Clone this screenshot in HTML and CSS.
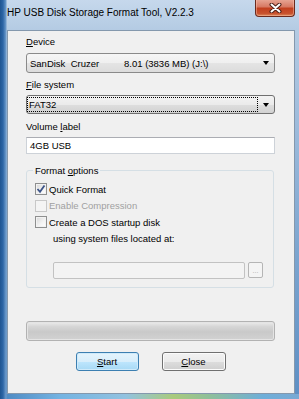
FILE: index.html
```html
<!DOCTYPE html>
<html>
<head>
  <title>HP USB Disk Storage Format Tool</title>
  <meta name="viewport" content="width=device-width, initial-scale=1.0">
  <link rel="stylesheet" href="styles.css">
</head>
<body>
  <div class="window">
    <div class="titlebar">
      <span class="title">HP USB Disk Storage Format Tool, V2.2.3</span>
      <span class="close-btn">
        <svg width="13" height="10" viewBox="0 0 13 10">
          <path d="M2.5 1.5 L10.5 8.5 M10.5 1.5 L2.5 8.5" stroke="#4a1d15" stroke-width="4" stroke-linecap="round"/>
          <path d="M2.5 1.5 L10.5 8.5 M10.5 1.5 L2.5 8.5" stroke="#ffffff" stroke-width="2" stroke-linecap="round"/>
        </svg>
      </span>
    </div>

    <div class="client">
      <div class="field-label"><u>D</u>evice</div>
      <div class="combo">
        <span class="combo-text">
          <span class="dev-name">SanDisk&nbsp; Cruzer</span>
          <span>8.01 (3836 MB) (J:\)</span>
        </span>
        <span class="arrow"></span>
      </div>

      <div class="field-label label-fs"><u>F</u>ile system</div>
      <div class="combo combo-fs">
        <span class="focus-rect">FAT32</span>
        <span class="arrow"></span>
      </div>

      <div class="field-label label-vol">Volume <u>l</u>abel</div>
      <div class="textbox">4GB USB</div>

      <fieldset class="group">
        <legend>Format <u>o</u>ptions</legend>
        <div class="check-row">
          <span class="checkbox checked">
            <svg width="10" height="10" viewBox="0 0 10 10">
              <path d="M1.5 5 L4 7.8 L8.5 1.5" fill="none" stroke="#3c5488" stroke-width="1.8"/>
            </svg>
          </span>
          <span>Quick Format</span>
        </div>
        <div class="check-row disabled">
          <span class="checkbox"></span>
          <span>Enable Compression</span>
        </div>
        <div class="check-row">
          <span class="checkbox"></span>
          <span>Create a DOS startup disk</span>
        </div>
        <div class="sub-text">using system files located at:</div>
        <div class="path-row">
          <div class="path-box"></div>
          <div class="browse-btn">...</div>
        </div>
      </fieldset>

      <div class="progress"></div>

      <div class="buttons">
        <div class="btn btn-default"><u>S</u>tart</div>
        <div class="btn"><u>C</u>lose</div>
      </div>
    </div>
  </div>
</body>
</html>
```

FILE: styles.css
```css
html, body {
  margin: 0;
  padding: 0;
}

body {
  width: 299px;
  height: 399px;
  overflow: hidden;
  font-family: "Liberation Sans", Arial, sans-serif;
  font-size: 9.5px;
  color: #000;
}

.window {
  width: 299px;
  height: 399px;
  display: flex;
  flex-direction: column;
  box-sizing: border-box;
  background:
    linear-gradient(to right, #1f5591 0, #2d66a6 3px, #6d9bcb 6px, transparent 7px) left top / 7px 100% no-repeat,
    linear-gradient(to right, #4b86c0 0, #74b3e2 20%, #92c2e0 42%, #a9ca7c 58%, #8fbf9a 70%, #6eaed9 88%, #7aa9d3 100%) left bottom / 100% 5px no-repeat,
    linear-gradient(to bottom, #c6d8ec 0, #b4cbe3 30px, #9ebcdc 120px, #7aa4cf 260px, #5d8fc4 399px);
}

/* barra de titulo */
.titlebar {
  height: 30px;
  display: flex;
  align-items: flex-start;
  flex-shrink: 0;
}

.title {
  padding-left: 7px;
  padding-top: 7px;
  font-size: 10px;
  line-height: 12px;
  color: #000;
}

.close-btn {
  margin-left: auto;
  margin-right: 4px;
  width: 38px;
  height: 17px;
  margin-top: -1px;
  border: 1px solid #6a2a1e;
  border-top: none;
  border-radius: 0 0 4px 4px;
  background: linear-gradient(to bottom, #e9a998 0, #d77a64 45%, #c2401f 55%, #c8522e 85%, #dc8a5a 100%);
  box-shadow: inset 0 0 0 1px rgba(255, 200, 180, 0.45);
  display: flex;
  align-items: center;
  justify-content: center;
}

/* area cliente */
.client {
  flex: 1;
  margin: 0 4px 5px 7px;
  border: 1px solid #8498ad;
  background-color: #f0f0f0;
  padding: 4px 19px 0 18px;
  display: flex;
  flex-direction: column;
}

.field-label {
  line-height: 13px;
  height: 13px;
}

.label-fs {
  margin-top: 5px;
}

.label-vol {
  margin-top: 6px;
}

.combo {
  margin-top: 5px;
  height: 20px;
  box-sizing: border-box;
  border: 1px solid #8a8a8a;
  border-radius: 3px;
  background: linear-gradient(to bottom, #f6f6f6 0, #efefef 50%, #e4e4e4 51%, #dcdcdc 100%);
  display: flex;
  align-items: center;
  padding-left: 3px;
}

.combo-fs {
  margin-top: 4px;
  height: 19px;
  padding-left: 0;
  background: linear-gradient(to bottom, #f3f3f3 0, #ebebeb 50%, #dedede 51%, #d2d2d2 100%);
  border-color: #707070;
}

.combo-text {
  flex: 1;
  display: flex;
  white-space: nowrap;
}

.dev-name {
  width: 94px;
  white-space: pre;
}

.focus-rect {
  flex: 1;
  align-self: stretch;
  margin: 1px 0 1px 0;
  border: 1px dotted #000;
  display: flex;
  align-items: center;
  padding-left: 1px;
}

.arrow {
  width: 0;
  height: 0;
  border-left: 3.5px solid transparent;
  border-right: 3.5px solid transparent;
  border-top: 4px solid #000;
  margin: 0 5px 0 6px;
}

.combo-fs .arrow {
  margin-left: 5px;
}

.textbox {
  margin-top: 4px;
  height: 17px;
  box-sizing: border-box;
  border: 1px solid #cdd2d8;
  border-top-color: #abadb3;
  background-color: #fff;
  padding-left: 3px;
  line-height: 15px;
}

/* opciones de formato */
.group {
  margin: 10px 1px 0 0;
  padding: 4px 0 8px 8px;
  border: 1px solid #d5dfe5;
  border-radius: 3px;
  min-width: 0;
}

.group legend {
  padding: 0 2px;
  margin-left: -2px;
  line-height: 13px;
}

.check-row {
  height: 16.5px;
  display: flex;
  align-items: center;
  gap: 2px;
}

.checkbox {
  width: 12px;
  height: 12px;
  box-sizing: border-box;
  border: 1px solid #8e8f8f;
  background: linear-gradient(135deg, #d6d6d6 0, #f4f4f4 60%, #ffffff 100%);
  box-shadow: inset 0 0 0 1px #f2f2f2;
  display: flex;
  align-items: center;
  justify-content: center;
}

.disabled {
  color: #a0a0a0;
}

.disabled .checkbox {
  border-color: #c8c8c8;
  background: #f4f4f4;
  box-shadow: none;
}

.sub-text {
  height: 16px;
  line-height: 16px;
  padding-left: 18px;
}

.path-row {
  margin-top: 15px;
  padding-left: 18px;
  display: flex;
  gap: 3px;
}

.path-box {
  width: 192px;
  height: 17px;
  box-sizing: border-box;
  border: 1px solid #c2c2c2;
  border-radius: 2px;
  background-color: #f3f3f3;
}

.browse-btn {
  width: 15px;
  height: 16px;
  box-sizing: border-box;
  border: 1px solid #b5b5b5;
  border-radius: 2px;
  background-color: #f4f4f4;
  color: #a8a8a8;
  font-size: 7px;
  line-height: 16px;
  text-align: center;
}

/* barra de progreso */
.progress {
  margin-top: 33px;
  height: 20px;
  box-sizing: border-box;
  border: 1px solid #b2b2b2;
  border-radius: 3px;
  background: linear-gradient(to bottom, #ececec 0, #d6d6d6 25%, #c9c9c9 55%, #d2d2d2 100%);
  box-shadow: inset 0 0 0 1px #e4e4e4;
}

.buttons {
  margin-top: 11px;
  display: flex;
  justify-content: center;
  gap: 23px;
}

.btn {
  width: 64px;
  height: 19px;
  box-sizing: border-box;
  border: 1px solid #707070;
  border-radius: 3px;
  background: linear-gradient(to bottom, #f2f2f2 0, #ebebeb 50%, #dddddd 51%, #cfcfcf 100%);
  box-shadow: inset 0 0 0 1px #fbfbfb;
  text-align: center;
  line-height: 17px;
}

.btn-default {
  width: 63px;
  border-color: #3c7fb1;
  background: linear-gradient(to bottom, #e5f4fc 0, #d8eefb 50%, #bee6fd 51%, #a7d9f5 100%);
  box-shadow: inset 0 0 0 1px #cfeafa;
}
```
